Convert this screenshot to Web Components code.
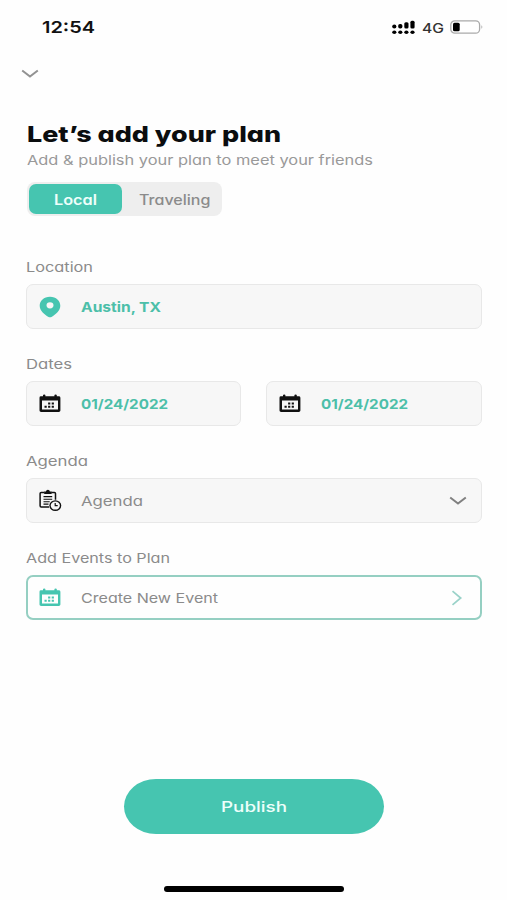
<!DOCTYPE html>
<html lang="en">
<head>
<meta charset="utf-8">
<title>Add your plan</title>
<style>
html,body{margin:0;padding:0;background:#fefefe}
body{width:507px;height:900px;overflow:hidden;font-family:Inter,"Open Sans","Liberation Sans",sans-serif;font-feature-settings:"cv11" 1;color:#8b8b8b}
</style>
</head>
<body>
<plan-screen></plan-screen>
<script>
const define = (name, html, setup) => customElements.define(name, class extends HTMLElement {
  connectedCallback() {
    if (this.shadowRoot) return;
    const root = this.attachShadow({ mode: 'open' });
    root.innerHTML = typeof html === 'function' ? html(this) : html;
    if (setup) setup(this, root);
  }
});

// One line of wide lettering, set to the width given in `w`.
define('wide-text', el => `<style>
  :host{display:block;flex:none;width:${el.getAttribute('w')}px;font-size:13.3px;line-height:17px;white-space:nowrap}
  span{display:inline-block;transform-origin:0 50%}
  </style><span>${el.getAttribute('text')}</span>`, (el, root) => {
  const s = root.querySelector('span');
  s.style.transform = `scaleX(${el.getAttribute('w') / s.getBoundingClientRect().width})`;
});

const icons = {
  down: [18, 10, '<path d="M1.2 1.500 9 7.600l7.800-6.100" fill="none" stroke="currentColor" stroke-width="2"/>'],
  right: [12, 16, '<path d="M1.5 1.2 9.7 8l-8.2 6.8" fill="none" stroke="currentColor" stroke-width="1.7"/>'],
  pin: [22, 22, '<path fill-rule="evenodd" d="M11 .7C4.800.7.7 4.800.7 9.800c0 4.800 4.500 8.700 8.800 11.100q1.500.8 3 0c4.300-2.400 8.800-6.300 8.800-11.100C21.300 4.800 17.200.7 11 .7ZM11 6.200a3.500 3.100 0 1 1 0 6.200 3.500 3.100 0 0 1 0-6.200Z" fill="currentColor"/>'],
  calendar: [22, 19, '<path fill-rule="evenodd" d="M1.900 2.300H4V1.200q0-.7 1.200-.7t1.200.7v1.100h9V1.200q0-.7 1.200-.7t1.200.7v1.100h2q1.600 0 1.600 1.400v12.800q0 1.400-1.600 1.400H2.100q-1.600 0-1.600-1.400V3.700q0-1.400 1.400-1.400ZM3 6.400v9.200h16V6.400Z" fill="currentColor"/><path d="M9.100 8.500h2.200v2H9.100zM12.700 8.500h2.200v2h-2.200zM5.500 11.700h2.200v2H5.500zM9.100 11.700h2.200v2H9.100zM12.700 11.700h2.200v2h-2.200z" fill="currentColor"/>'],
  agenda: [23, 23, '<g fill="none" stroke="currentColor" stroke-width="1.500"><path d="M5.500 3.500H2.200q-1.100 0-1.100 1v12.200q0 1.200 1.100 1.200h7.900M12.200 3.500h3.200q1.100 0 1.100 1v6.200"/><path d="M4.500 7.600h8.700M4.500 10.200h8.700M4.500 12.800h6.200M4.500 15.100h5" stroke-width="1.100"/><ellipse cx="16.300" cy="16.600" rx="5.300" ry="4.700" stroke-width="1.400"/><path d="M16.200 13.900v2.800h2.500" stroke-width="1.200"/></g><path d="M5.200 2.500h1.700Q7.200.7 8.900.7t2 1.800h1.700v2.600H5.200Z" fill="currentColor"/>']
};
define('line-icon', el => {
  const [w, h, art] = icons[el.getAttribute('name')];
  return `<style>:host{display:block;flex:none;width:${w}px;height:${h}px}svg{display:block}</style><svg width="${w}" height="${h}" viewBox="0 0 ${w} ${h}">${art}</svg>`;
});

define('status-bar', `<style>
  :host{display:flex;height:54px;padding:0 23px 0 42px;align-items:center;box-sizing:border-box;color:#111}
  .time{font-size:16.500px;font-weight:600;line-height:22px;margin-right:auto}
  .net{font-size:13px;font-weight:500;margin:2px 6px 0 7px;color:#333}
  svg{display:block;flex:none}
  </style>
  <wide-text class="time" w="53" text="12:54"></wide-text>
  <svg width="23" height="15" viewBox="0 0 23 15"><g fill="#000"><ellipse cx="2.300" cy="6.600" rx="2.100" ry="2"/><rect x="6.200" y="4" width="4.200" height="4.600" rx="1.800"/><rect x="12.300" y="2.300" width="4.200" height="6.300" rx="1.500"/><rect x="18.400" y=".8" width="4.200" height="7.800" rx="1.500"/><ellipse cx="2.300" cy="12.200" rx="2.100" ry="1.800"/><ellipse cx="8.300" cy="12.200" rx="2.100" ry="1.800"/><ellipse cx="14.400" cy="12.200" rx="2.100" ry="1.800"/><ellipse cx="20.500" cy="12.200" rx="2.100" ry="1.800"/></g></svg>
  <wide-text class="net" w="22" text="4G"></wide-text>
  <svg width="34" height="14" viewBox="0 0 34 14"><rect x=".8" y=".8" width="28.800" height="12.400" rx="4" fill="#fff" stroke="#aaa" stroke-width="1.300"/><rect x="3" y="2.700" width="6.700" height="8.600" rx="1.500" fill="#000"/><path d="M31.500 5q1.800 2 0 4z" fill="#999"/></svg>`);

define('segment-control', `<style>
  :host{display:flex;width:195px;height:34px;padding:2px;border-radius:8px;background:#eee;box-sizing:border-box}
  div{display:flex;align-items:center;justify-content:center;height:30px;border-radius:7px;box-sizing:border-box}
  .on{width:93px;background:#46c5b0;color:#eefffb;font-weight:600}
  .off{width:98px;padding-left:7px;font-weight:450}
  wide-text{font-size:14px}
  </style><div class="on"><wide-text w="43" text="Local"></wide-text></div><div class="off"><wide-text w="71.500" text="Traveling"></wide-text></div>`);

define('form-group', el => `<style>
  :host{display:flex;flex-direction:column;gap:8px}
  .row{display:flex;gap:25px}
  ::slotted(*){flex:1}
  </style><wide-text w="${el.getAttribute('w')}" text="${el.getAttribute('label')}"></wide-text><div class="row"><slot></slot></div>`);

define('form-field', el => `<style>
  :host{display:flex;align-items:center;height:45px;box-sizing:border-box;padding:0 12px;border:1px solid #e8e8e8;border-radius:7px;background:#f7f7f7}
  :host([outlined]){border:2px solid #95cfc2;padding:0 11px;background:#fefefe}
  :host([filled]) wide-text{color:#4cbfa9;font-weight:700}
  wide-text{padding-top:1px}
  .icon{width:42px;color:${el.getAttribute('tint') || '#111'}}
  .end{margin-left:auto;color:${el.hasAttribute('outlined') ? '#9ad2c9' : '#808080'}}
  .end line-icon{margin-right:${el.hasAttribute('outlined') ? '6px' : '2px'}}
  </style><div class="icon"><line-icon name="${el.getAttribute('icon')}"></line-icon></div>
  <wide-text w="${el.getAttribute('w')}" text="${el.getAttribute('value')}"></wide-text>
  <div class="end">${el.hasAttribute('end') ? `<line-icon name="${el.getAttribute('end')}"></line-icon>` : ''}</div>`);

define('pill-button', `<style>
  :host{display:flex;align-items:center;justify-content:center;width:260px;height:55px;border-radius:32px/27.500px;background:#46c5b0;color:#eefffb;font-weight:500}
  wide-text{font-size:14.500px}
  </style><wide-text w="66" text="Publish"></wide-text>`);

define('plan-screen', `<style>
  :host{display:flex;flex-direction:column;height:900px;box-sizing:border-box}
  .back{padding:15px 21px 0;height:66px;box-sizing:border-box;color:#929292}
  main{padding:0 25.500px 0 26px}
  .title{font-size:22px;font-weight:800;line-height:28px;color:#0b0d0e;margin-left:.5px}
  .sub{margin:4px 0 13px 1px;color:#999}
  segment-control{margin:0 0 43px 1px}
  .form{display:flex;flex-direction:column;gap:27px}
  form-group{padding-left:.4px}
  pill-button{margin:159px 0 0 124px}
  .home{width:180px;height:6px;border-radius:3px;background:#000;margin:52px 0 0 164px}
  </style>
  <status-bar></status-bar>
  <div class="back"><line-icon name="down"></line-icon></div>
  <main>
    <wide-text class="title" w="254" text="Let’s add your plan"></wide-text>
    <wide-text class="sub" w="346" text="Add &amp; publish your plan to meet your friends"></wide-text>
    <segment-control></segment-control>
    <div class="form">
      <form-group label="Location" w="67"><form-field filled icon="pin" tint="#46c5b0" value="Austin, TX" w="80"></form-field></form-group>
      <form-group label="Dates" w="46"><form-field filled icon="calendar" value="01/24/2022" w="87"></form-field><form-field filled icon="calendar" value="01/24/2022" w="87"></form-field></form-group>
      <form-group label="Agenda" w="62"><form-field icon="agenda" value="Agenda" w="62" end="down"></form-field></form-group>
      <form-group label="Add Events to Plan" w="144"><form-field outlined icon="calendar" tint="#46c5b0" value="Create New Event" w="137" end="right"></form-field></form-group>
    </div>
  </main>
  <pill-button></pill-button>
  <div class="home"></div>`);
</script>
</body>
</html>
